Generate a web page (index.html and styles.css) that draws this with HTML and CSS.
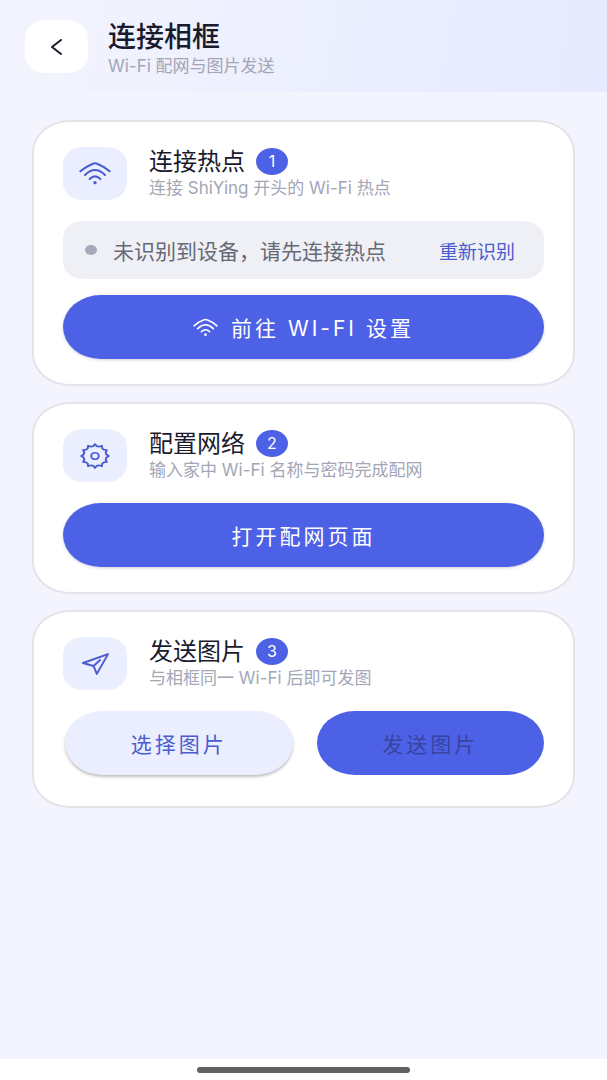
FILE: index.html
```html
<!DOCTYPE html>
<html lang="zh-CN">
  <head>
    <meta charset="utf-8" />
    <meta name="viewport" content="width=device-width, initial-scale=1" />
    <title>连接相框</title>
    <link rel="stylesheet" href="styles.css">
  </head>
  <body>
    <header class="topbar">
      <button class="back" type="button" aria-label="返回">
        <svg width="11" height="16" viewBox="0 0 11 16">
          <path d="M10 1L1 8l9 7" />
        </svg>
      </button>
      <div>
        <h1>连接相框</h1>
        <p class="subtitle">Wi-Fi 配网与图片发送</p>
      </div>
    </header>

    <main>
      <section class="card">
        <div class="card-header">
          <div class="card-icon">
            <svg width="32" height="23" viewBox="0 0 96 69">
              <path d="M4 28Q18 15 40 6Q48 2 56 6Q78 15 92 28M18 39Q48 9 78 39M32 51Q48 35 64 51" stroke-width="6" />
              <circle class="fill" cx="48" cy="62" r="5" />
            </svg>
          </div>
          <div>
            <div class="card-title">
              <h2>连接热点</h2>
              <span class="badge">1</span>
            </div>
            <p class="subtitle">连接 ShiYing 开头的 Wi-Fi 热点</p>
          </div>
        </div>
        <div class="status">
          <span class="dot"></span>
          <p>未识别到设备，请先连接热点</p>
          <button class="retry" type="button">重新识别</button>
        </div>
        <button class="btn wifi-btn" type="button">
          <svg width="25" height="19" viewBox="0 0 96 69">
            <path d="M4 28Q18 15 40 6Q48 2 56 6Q78 15 92 28M18 39Q48 9 78 39M32 51Q48 35 64 51" stroke-width="6" />
            <circle class="fill" cx="48" cy="62" r="5" />
          </svg>
          前往 Wi-Fi 设置
        </button>
      </section>

      <section class="card">
        <div class="card-header">
          <div class="card-icon">
            <svg width="30" height="26" viewBox="0 0 24 24" preserveAspectRatio="none">
              <path d="M12 1L13.4 2.9 15.3 3.4 17.5 2.5 17.8 4.9 19.1 6.2 21.5 6.5 20.6 8.7 21.1 10.6 23 12 21.1 13.4 20.6 15.3 21.5 17.5 19.1 17.8 17.8 19.1 17.5 21.5 15.3 20.6 13.4 21.1 12 23 10.6 21.1 8.7 20.6 6.5 21.5 6.2 19.1 4.9 17.8 2.5 17.5 3.4 15.3 2.9 13.4 1 12 2.9 10.6 3.4 8.7 2.5 6.5 4.9 6.2 6.2 4.9 6.5 2.5 8.7 3.4 10.6 2.9z" stroke-width="1.6" />
              <circle cx="12" cy="12" r="3" stroke-width="1.6" />
            </svg>
          </div>
          <div>
            <div class="card-title">
              <h2>配置网络</h2>
              <span class="badge">2</span>
            </div>
            <p class="subtitle">输入家中 Wi-Fi 名称与密码完成配网</p>
          </div>
        </div>
        <button class="btn" type="button">打开配网页面</button>
      </section>

      <section class="card">
        <div class="card-header">
          <div class="card-icon">
            <svg width="29" height="24" viewBox="0 0 88 72">
              <path d="M6 33L82 6L48 66L38 42ZM38 42L58 24" stroke-width="6" />
            </svg>
          </div>
          <div>
            <div class="card-title">
              <h2>发送图片</h2>
              <span class="badge">3</span>
            </div>
            <p class="subtitle">与相框同一 Wi-Fi 后即可发图</p>
          </div>
        </div>
        <div class="btn-row">
          <button class="btn light" type="button">选择图片</button>
          <button class="btn" type="button" disabled>发送图片</button>
        </div>
      </section>
    </main>

    <footer class="gesture-bar"><span></span></footer>
  </body>
</html>
```

FILE: styles.css
```css
*,
*::after,
*::before {
  margin: 0;
  padding: 0;
  box-sizing: border-box;
}

body {
  display: flex;
  flex-direction: column;
  min-height: 100vh;
  background-color: #f3f4fd;
  color: #1a1a2e;
  font-family: Inter, "Noto Sans CJK SC", sans-serif;
}

button {
  border: none;
  background: none;
  font-family: inherit;
  cursor: pointer;
}

svg {
  flex: none;
  fill: none;
  stroke: currentColor;
  stroke-linecap: round;
  stroke-linejoin: round;
}

svg .fill {
  fill: currentColor;
  stroke: none;
}

h1 {
  font-size: 28px;
  line-height: 34px;
  font-weight: 500;
}

h2 {
  font-size: 24px;
  line-height: 28px;
  font-weight: 400;
}

.subtitle {
  color: #a3a6b5;
  font-size: 17px;
  line-height: 24px;
}

.topbar {
  display: flex;
  gap: 20px;
  padding: 20px 25px 14px;
  background: linear-gradient(100deg, #f3f4fd, #eceffe 50%, #e7eafe);
}

.back {
  display: flex;
  justify-content: center;
  align-items: center;
  width: 63px;
  height: 53px;
  border-radius: 21px / 18px;
  background-color: #fff;
  color: #1a1a2e;
  stroke-width: 2;
}

main {
  flex: 1;
  display: flex;
  flex-direction: column;
  gap: 16px;
  padding: 28px 32px;
}

.card {
  padding: 25px 29px;
  border: 2px solid #e3e3e9;
  border-radius: 38px / 32px;
  background-color: #fff;
}

.card-header {
  display: flex;
  align-items: center;
  gap: 22px;
  margin-bottom: 21px;
}

.card-icon {
  display: flex;
  justify-content: center;
  align-items: center;
  width: 64px;
  height: 53px;
  border-radius: 20px / 17px;
  background-color: #eaeeff;
  color: #4a5cd0;
}

.card-title {
  display: flex;
  align-items: center;
  gap: 11px;
}

.badge {
  width: 32px;
  height: 27px;
  border-radius: 50%;
  background-color: #4d61e6;
  color: #fff;
  font-size: 16px;
  line-height: 27px;
  text-align: center;
}

.status {
  display: flex;
  align-items: center;
  gap: 16px;
  min-height: 58px;
  margin-bottom: 16px;
  padding: 0 29px 0 22px;
  border-radius: 20px / 17px;
  background-color: #eff0f6;
  color: #666975;
  font-size: 21px;
}

.dot {
  width: 12px;
  height: 10px;
  border-radius: 50%;
  background-color: #a5a8b8;
}

.retry {
  margin-left: auto;
  color: #4a5cd0;
  font-size: 19px;
}

.btn {
  display: flex;
  justify-content: center;
  align-items: center;
  width: 100%;
  height: 64px;
  border-radius: 38px / 32px;
  background-color: #4d61e6;
  box-shadow: 0 1px 3px rgba(30, 40, 90, 0.2);
  color: #fff;
  font-size: 21px;
  letter-spacing: 3px;
  text-transform: uppercase;
}

.wifi-btn {
  gap: 13px;
}

.btn.light {
  background-color: #eaeeff;
  box-shadow: 0 2px 3px rgba(0, 0, 0, 0.25);
  color: #4a5cd0;
}

.btn:disabled {
  box-shadow: none;
  color: #3744a0;
  cursor: default;
}

.btn-row {
  display: flex;
  gap: 24px;
  padding: 0 0 6px 2px;
}

.gesture-bar {
  display: flex;
  justify-content: center;
  align-items: center;
  height: 21px;
  background-color: #fff;
}

.gesture-bar span {
  width: 35%;
  height: 6px;
  border-radius: 3px;
  background-color: #606060;
}
```
